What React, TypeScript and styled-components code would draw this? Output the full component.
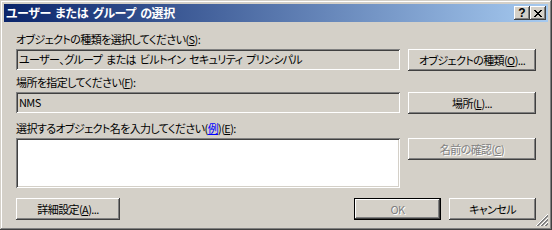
import * as React from 'react';
import styled, { createGlobalStyle, css } from 'styled-components';

const GlobalStyle = createGlobalStyle`
  html, body {
    margin: 0;
    padding: 0;
    background: #d4d0c8;
  }
  body {
    font-family: "Noto Sans CJK JP", "Liberation Sans", sans-serif;
    font-size: 11px;
    font-feature-settings: "palt";
    color: #000;
  }
`;

const raised = css`
  background: #d4d0c8;
  box-shadow: inset -1px -1px #404040, inset 1px 1px #ffffff,
    inset -2px -2px #808080, inset 2px 2px #d4d0c8;
`;

const sunken = css`
  box-shadow: inset 1px 1px #808080, inset -1px -1px #ffffff,
    inset 2px 2px #404040, inset -2px -2px #d4d0c8;
`;

const uiText = css`
  font-family: "Noto Sans CJK JP", "Liberation Sans", sans-serif;
  font-feature-settings: "palt";
  font-size: 11px;
  letter-spacing: -0.6px;
  word-spacing: 2px;
  white-space: pre;
`;

const Window = styled.div`
  position: relative;
  width: 552px;
  height: 230px;
  box-sizing: border-box;
  padding: 4px;
  display: flex;
  flex-direction: column;
  background: #d4d0c8;
  box-shadow: inset -1px -1px #404040, inset 1px 1px #d4d0c8,
    inset -2px -2px #808080, inset 2px 2px #ffffff;
`;

const TitleBar = styled.div`
  height: 18px;
  display: flex;
  align-items: center;
  padding: 0 2px;
  background: linear-gradient(to right, #0a246a, #a6caf0);
`;

const Title = styled.span`
  ${uiText};
  flex: 1;
  color: #fff;
  font-size: 12px;
  letter-spacing: -0.4px;
  word-spacing: 2px;
  font-weight: bold;
  line-height: 18px;
`;

const CaptionButton = styled.button`
  ${raised};
  width: 16px;
  height: 14px;
  border: 0;
  padding: 0;
  display: flex;
  align-items: center;
  justify-content: center;
  font-family: "Liberation Sans", sans-serif;
  font-weight: bold;
  font-size: 12px;
  line-height: 14px;
  color: #000;
`;

const Client = styled.div`
  flex: 1;
  padding: 10px 12px 0 12px;
  display: flex;
  flex-direction: column;
`;

const Label = styled.div<{ $gap: number }>`
  ${uiText};
  margin-top: ${(p) => p.$gap}px;
  height: 14px;
  line-height: 14px;
`;

const Row = styled.div`
  margin-top: 3px;
  display: grid;
  grid-template-columns: 384px 128px;
  column-gap: 8px;
  align-items: start;
`;

const Field = styled.div`
  ${sunken};
  ${uiText};
  height: 21px;
  box-sizing: border-box;
  padding: 0 3px;
  line-height: 21px;
  overflow: hidden;
`;

const TextArea = styled.div`
  ${sunken};
  background: #fff;
  height: 50px;
`;

const Button = styled.button<{ $width?: number; $default?: boolean }>`
  ${raised};
  ${uiText};
  width: ${(p) => (p.$width ? `${p.$width}px` : '100%')};
  height: 22px;
  border: 0;
  padding: 0;
  color: #000;
  &:disabled {
    color: #808080;
    text-shadow: 1px 1px #ffffff;
  }
  ${(p) =>
    p.$default &&
    css`
      box-shadow: inset 0 0 0 1px #000, inset -2px -2px #404040,
        inset 2px 2px #ffffff, inset -3px -3px #808080;
    `}
`;

const Footer = styled.div`
  margin-top: 10px;
  display: flex;
  gap: 8px;
`;

const Spacer = styled.div`
  flex: 1;
`;

const U = styled.span`
  text-decoration: underline;
`;

const Link = styled.span`
  color: #0000ff;
  text-decoration: underline;
`;

const Grip = styled.svg`
  position: absolute;
  right: 4px;
  bottom: 4px;
`;

const CloseGlyph = () => (
  <svg width="8" height="7" viewBox="0 0 8 7" shapeRendering="crispEdges">
    <path
      fill="#000"
      d="M0 0h2v1H0zM6 0h2v1H6zM1 1h2v1H1zM5 1h2v1H5zM2 2h4v1H2zM3 3h2v1H3zM2 4h4v1H2zM1 5h2v1H1zM5 5h2v1H5zM0 6h2v1H0zM6 6h2v1H6z"
    />
  </svg>
);

const SizeGrip = () => (
  <Grip width="12" height="12" viewBox="0 0 12 12" shapeRendering="crispEdges">
    {[0, 4, 8].map((o) => (
      <g key={o}>
        <path d={`M${o} 12 L12 ${o}`} stroke="#ffffff" />
        <path d={`M${o + 1} 12 L12 ${o + 1}`} stroke="#808080" />
        <path d={`M${o + 2} 12 L12 ${o + 2}`} stroke="#808080" />
      </g>
    ))}
  </Grip>
);

const App: React.FC = () => (
  <>
    <GlobalStyle />
    <Window>
      <TitleBar>
        <Title>ユーザー または グループ の選択</Title>
        <CaptionButton>?</CaptionButton>
        <CaptionButton>
          <CloseGlyph />
        </CaptionButton>
      </TitleBar>
      <Client>
        <Label $gap={0}>
          オブジェクトの種類を選択してください(<U>S</U>):
        </Label>
        <Row>
          <Field>ユーザー、グループ または ビルトイン セキュリティ プリンシパル</Field>
          <Button>
            オブジェクトの種類(<U>O</U>)...
          </Button>
        </Row>
        <Label $gap={4}>
          場所を指定してください(<U>F</U>):
        </Label>
        <Row>
          <Field>NMS</Field>
          <Button>
            場所(<U>L</U>)...
          </Button>
        </Row>
        <Label $gap={7}>
          選択するオブジェクト名を入力してください(<Link>例</Link>)(<U>E</U>):
        </Label>
        <Row>
          <TextArea />
          <Button disabled>
            名前の確認(<U>C</U>)
          </Button>
        </Row>
        <Footer>
          <Button $width={104}>
            詳細設定(<U>A</U>)...
          </Button>
          <Spacer />
          <Button $width={87} $default disabled>
            OK
          </Button>
          <Button $width={87}>キャンセル</Button>
        </Footer>
      </Client>
      <SizeGrip />
    </Window>
  </>
);

export default App;
